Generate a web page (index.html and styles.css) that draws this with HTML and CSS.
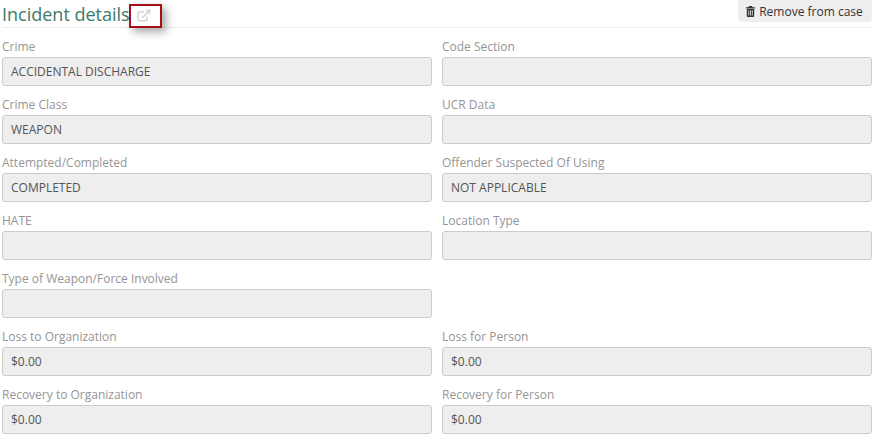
FILE: index.html
```html
<!DOCTYPE html>
<html lang="en">
<head>
<meta charset="utf-8">
<title>Incident details</title>
<link rel="stylesheet" href="styles.css">
</head>
<body>
<main class="panel">
  <header class="head">
    <h2 class="title">Incident details</h2>
    <span class="callout">
      <svg class="ext" width="14" height="13" viewBox="0 0 14 13" aria-hidden="true">
        <path d="M10 7.5V10.5a1.3 1.3 0 0 1-1.3 1.3H2.3A1.3 1.3 0 0 1 1 10.5V4.3A1.3 1.3 0 0 1 2.3 3H7" fill="none" stroke="#d4d4d4" stroke-width="1.5"/>
        <path d="M5 9 11 3" fill="none" stroke="#d4d4d4" stroke-width="1.6"/>
        <path d="M8.2 0.6H13.3V5.7Z" fill="#d4d4d4"/>
      </svg>
    </span>
    <button class="remove" type="button">
      <svg class="trash" width="9" height="11" viewBox="0 0 9 11" aria-hidden="true">
        <path d="M3 0h3l.6 1.2H9V2.4H0V1.2h2.4Z" fill="#333"/>
        <path d="M.8 3h7.4v7a1 1 0 0 1-1 1H1.8a1 1 0 0 1-1-1Z" fill="#333"/>
        <path d="M2.7 4.2v5.4M4.5 4.2v5.4M6.3 4.2v5.4" stroke="#eee" stroke-width=".8"/>
      </svg>
      Remove from case
    </button>
  </header>
  <div class="form">
    <div class="field"><label class="label">Crime</label><div class="input">ACCIDENTAL DISCHARGE</div></div>
    <div class="field"><label class="label">Code Section</label><div class="input"></div></div>
    <div class="field"><label class="label">Crime Class</label><div class="input">WEAPON</div></div>
    <div class="field"><label class="label">UCR Data</label><div class="input"></div></div>
    <div class="field"><label class="label">Attempted/Completed</label><div class="input">COMPLETED</div></div>
    <div class="field"><label class="label">Offender Suspected Of Using</label><div class="input">NOT APPLICABLE</div></div>
    <div class="field"><label class="label">HATE</label><div class="input"></div></div>
    <div class="field"><label class="label">Location Type</label><div class="input"></div></div>
    <div class="field"><label class="label">Type of Weapon/Force Involved</label><div class="input"></div></div>
    <div class="field"></div>
    <div class="field"><label class="label">Loss to Organization</label><div class="input">$0.00</div></div>
    <div class="field"><label class="label">Loss for Person</label><div class="input">$0.00</div></div>
    <div class="field"><label class="label">Recovery to Organization</label><div class="input">$0.00</div></div>
    <div class="field"><label class="label">Recovery for Person</label><div class="input">$0.00</div></div>
  </div>
</main>
</body>
</html>
```
FILE: styles.css
```css
html, body {
  margin: 0;
  padding: 0;
  background: #fff;
}
body {
  font-family: "Open Sans", "Liberation Sans", sans-serif;
  font-size: 12px;
  color: #555;
  overflow: hidden;
}
.panel {
  width: 870px;
  margin-left: 2px;
}
.head {
  position: relative;
  display: flex;
  align-items: flex-start;
  height: 27px;
  border-bottom: 1px solid #eee;
}
.title {
  margin: 2px 0 0;
  font-size: 18px;
  line-height: 24px;
  font-weight: 400;
  color: #3c7a68;
}
.callout {
  position: absolute;
  left: 127px;
  top: 4px;
  box-sizing: border-box;
  width: 33px;
  height: 24px;
  padding: 0 3px 1px 0;
  display: flex;
  align-items: center;
  justify-content: center;
  border: 2px solid #a50f15;
  box-shadow: 4px 4px 8px rgba(0, 0, 0, .35);
}
.ext { display: block; }
.remove {
  margin-left: auto;
  width: 134px;
  height: 22px;
  padding: 0 1px 0 0;
  display: flex;
  align-items: center;
  justify-content: center;
  gap: 4px;
  border: 0;
  border-radius: 0 0 4px 4px;
  background: #eee;
  font: 12px "Open Sans", "Liberation Sans", sans-serif;
  color: #333;
}
.trash { display: block; }
.form {
  display: grid;
  grid-template-columns: 430px 430px;
  column-gap: 10px;
  grid-auto-rows: 58px;
  padding-top: 9px;
}
.label {
  display: block;
  height: 20px;
  line-height: 20px;
  color: #959595;
}
.input {
  box-sizing: border-box;
  height: 29px;
  line-height: 27px;
  padding: 0 8px;
  border: 1px solid #ccc;
  border-radius: 3px;
  background: #eee;
  color: #555;
}
```
